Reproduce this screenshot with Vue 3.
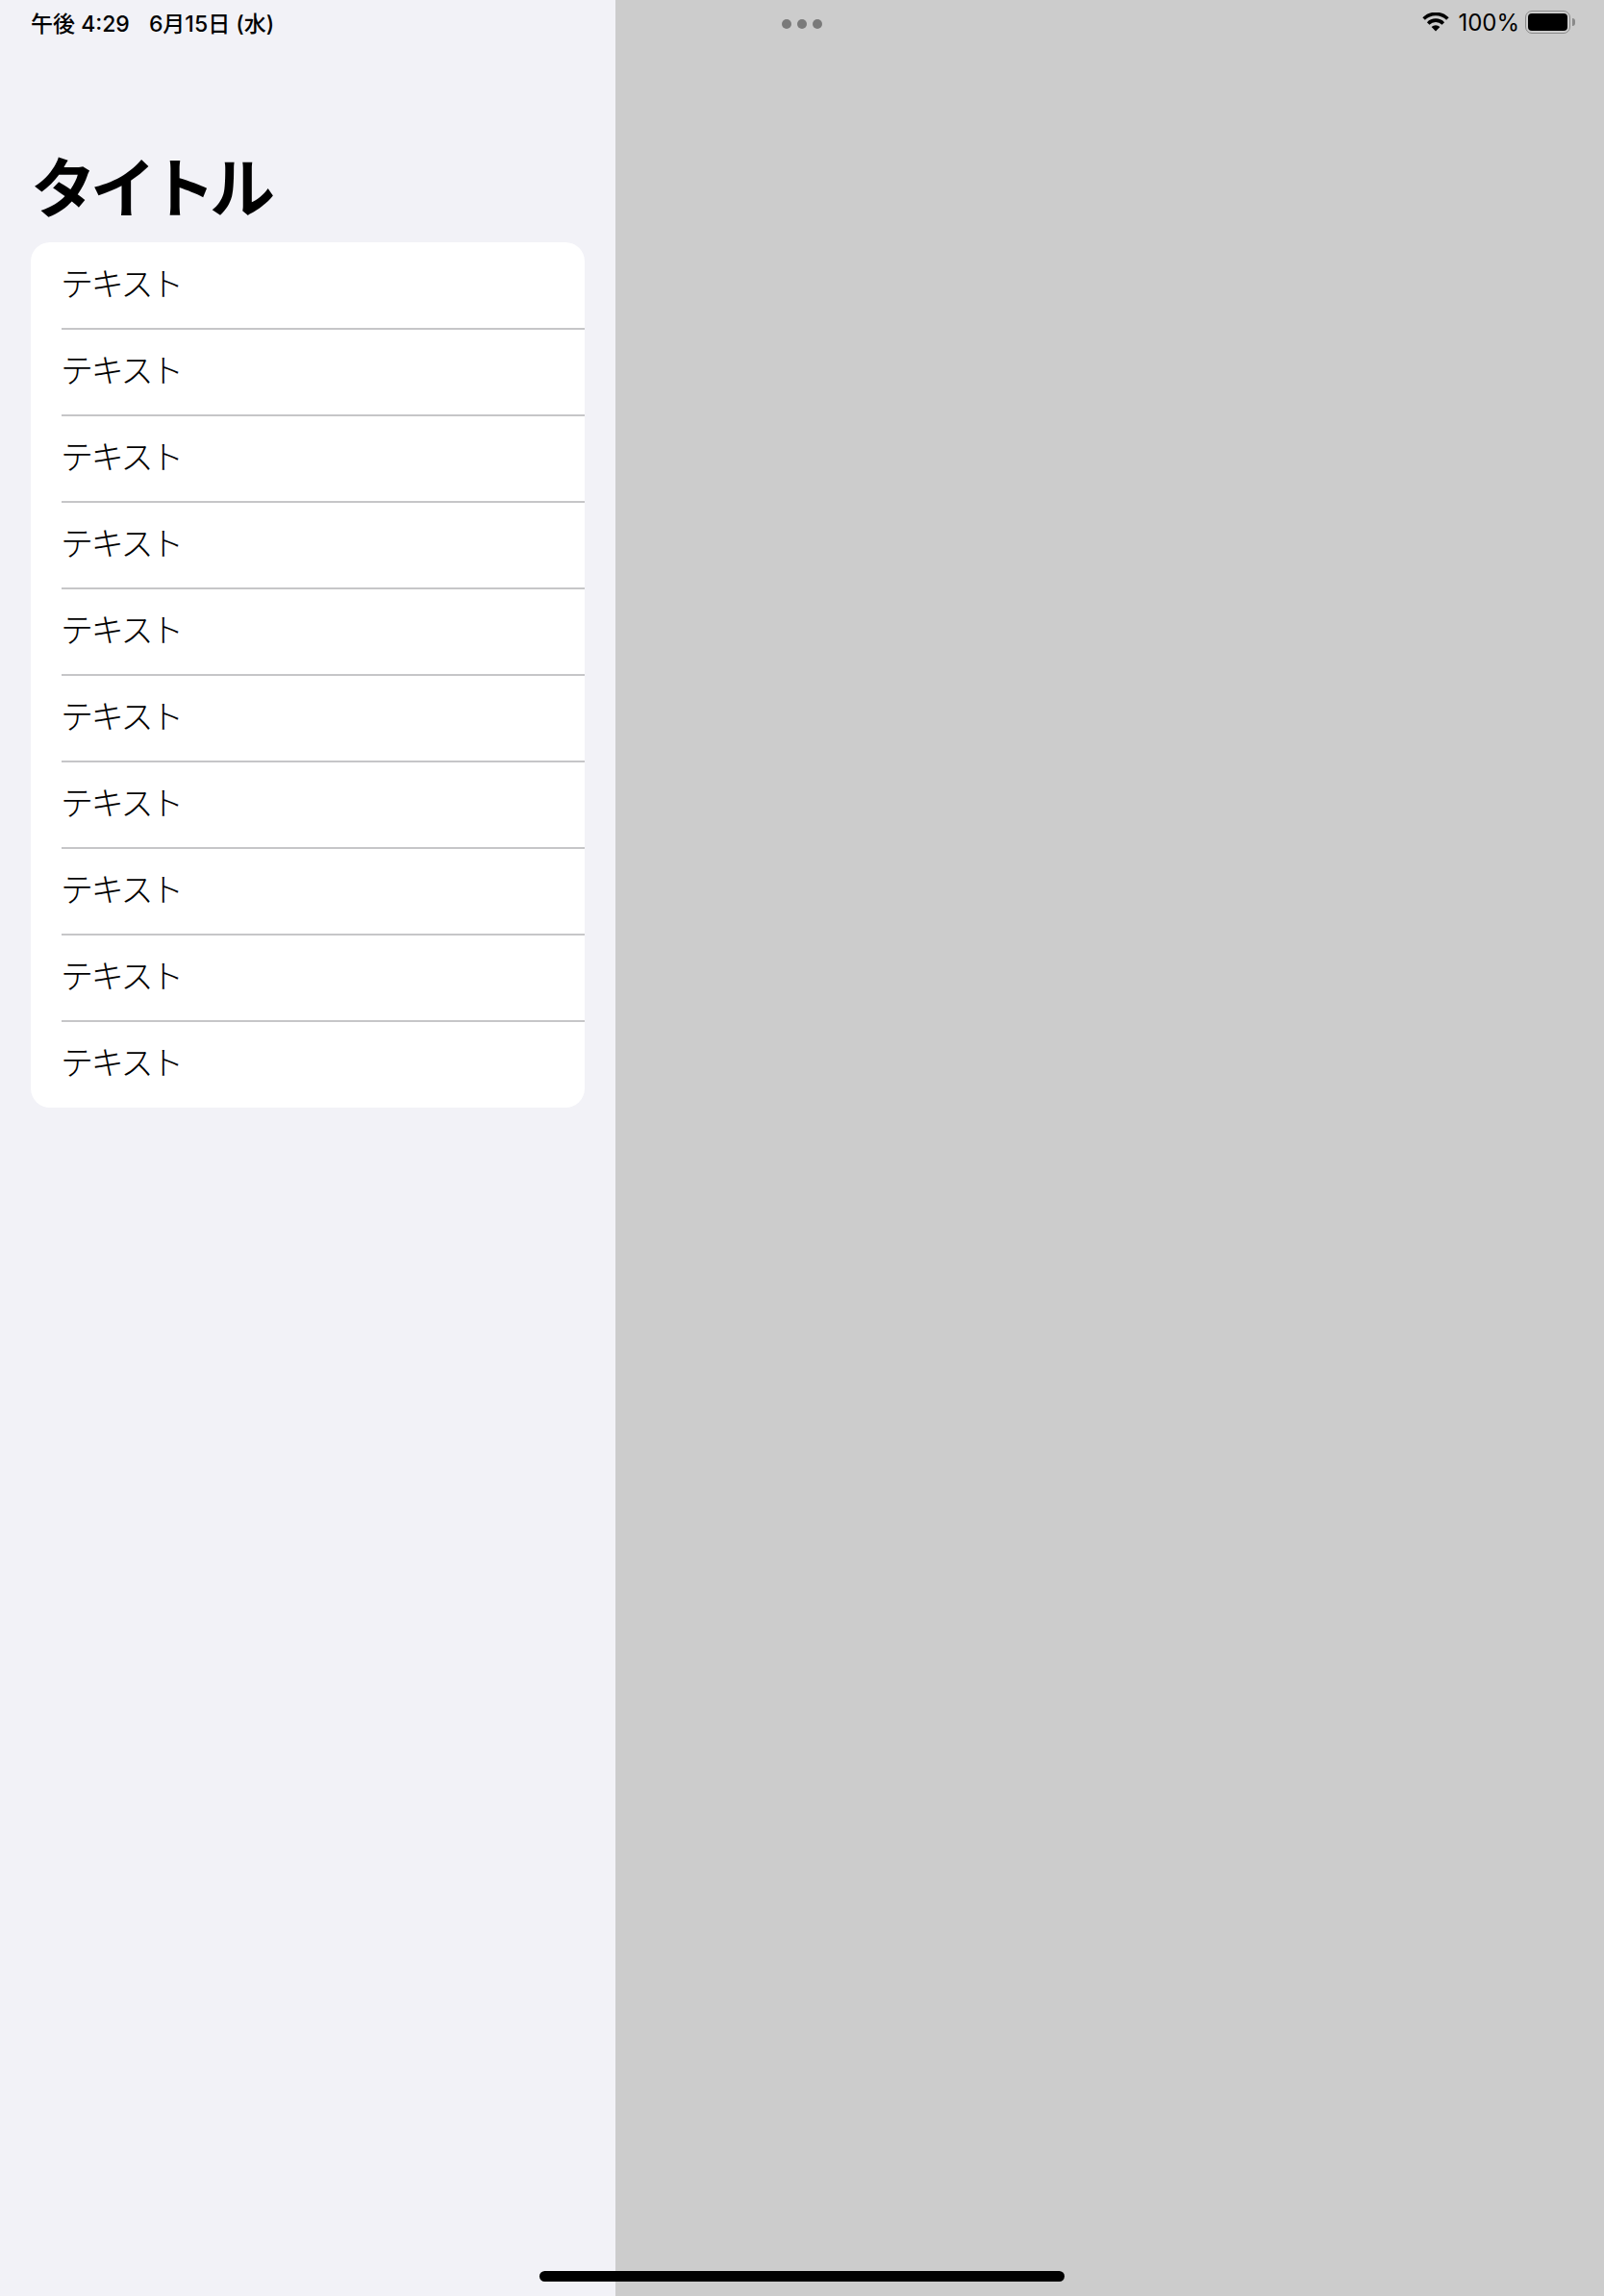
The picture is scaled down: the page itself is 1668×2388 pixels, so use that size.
<template>
  <div class="screen">
    <aside class="sidebar">
      <h1 class="title">タイトル</h1>
      <ul class="list">
        <li v-for="(item, index) in items" :key="index" class="row">
          <span class="row-label">{{ item }}</span>
        </li>
      </ul>
    </aside>
    <main class="detail"></main>

    <!-- status bar lies over both columns -->
    <div class="status-bar">
      <div class="status-time">
        <span>午後 4:29</span>
        <span>6月15日 (水)</span>
      </div>
      <div class="multitask-dots">
        <i></i>
        <i></i>
        <i></i>
      </div>
      <div class="status-right">
        <svg class="wifi" viewBox="0 0 28 20" width="28" height="20">
          <path d="M14 19.5 L9.6 14.9 A6.4 6.4 0 0 1 18.4 14.9 Z" fill="#000" />
          <path d="M6.2 11.4 A11 11 0 0 1 21.8 11.4" fill="none" stroke="#000" stroke-width="3.6" />
          <path d="M1.6 6.6 A17.5 17.5 0 0 1 26.4 6.6" fill="none" stroke="#000" stroke-width="3.6" />
        </svg>
        <span class="battery-text">100%</span>
        <div class="battery">
          <div class="battery-body">
            <div class="battery-fill"></div>
          </div>
          <div class="battery-nub"></div>
        </div>
      </div>
    </div>

    <div class="home-indicator"></div>
  </div>
</template>

<script setup>
const items = Array(10).fill("テキスト");
</script>

<style>
html,
body {
  margin: 0;
  padding: 0;
}
</style>

<style scoped>
.screen {
  position: relative;
  display: flex;
  width: 1668px;
  height: 2388px;
  overflow: hidden;
  font-family: Inter, "Noto Sans CJK JP", sans-serif;
  color: #000;
}

.sidebar {
  box-sizing: border-box;
  width: 640px;
  padding: 152px 32px 0;
  background-color: #f2f2f7;
}

.title {
  margin: 0 0 16px;
  height: 84px;
  font-size: 68px;
  line-height: 80px;
  font-weight: 700;
  letter-spacing: -6px;
  font-family: "Noto Sans CJK JP", sans-serif;
}

.list {
  margin: 0;
  padding: 0;
  list-style: none;
  background-color: #fff;
  border-radius: 20px;
  overflow: hidden;
}

.row {
  position: relative;
  display: flex;
  align-items: center;
  height: 90px;
  padding-left: 31px;
  box-sizing: border-box;
}

.row + .row::before {
  content: "";
  position: absolute;
  left: 32px;
  right: 0;
  top: -1px;
  height: 1.5px;
  background-color: #c6c6c8;
}

.row-label {
  font-family: "Noto Sans CJK JP", sans-serif;
  font-size: 34px;
  font-weight: 300;
  letter-spacing: -2.3px;
  line-height: 84px;
  height: 90px;
}

.detail {
  flex: 1;
  background-color: #cccccc;
}

.status-bar {
  position: absolute;
  top: 0;
  left: 0;
  right: 0;
  height: 46px;
  display: flex;
  align-items: center;
  justify-content: space-between;
  padding: 0 30px 0 32px;
}

.status-time {
  display: flex;
  gap: 20px;
  font-size: 23px;
  font-weight: 500;
}

.multitask-dots {
  position: absolute;
  left: 813px;
  top: 20px;
  display: flex;
  gap: 6px;
}

.multitask-dots i {
  display: block;
  width: 10px;
  height: 10px;
  border-radius: 50%;
  background-color: #7a7a7a;
}

.status-right {
  display: flex;
  align-items: center;
  gap: 9px;
}

.battery-text {
  font-size: 24px;
  font-weight: 400;
  margin-right: -3px;
}

.battery {
  display: flex;
  align-items: center;
  gap: 2px;
}

.battery-body {
  box-sizing: border-box;
  width: 47px;
  height: 24px;
  padding: 2px;
  border: 1.5px solid #8a8a8a;
  border-radius: 7px;
}

.battery-fill {
  height: 100%;
  background-color: #000;
  border-radius: 4px;
}

.battery-nub {
  width: 3px;
  height: 8px;
  background-color: #8a8a8a;
  border-radius: 0 3px 3px 0;
}

.home-indicator {
  position: absolute;
  left: 561px;
  bottom: 15px;
  width: 546px;
  height: 11px;
  background-color: #000;
  border-radius: 6px;
}
</style>
